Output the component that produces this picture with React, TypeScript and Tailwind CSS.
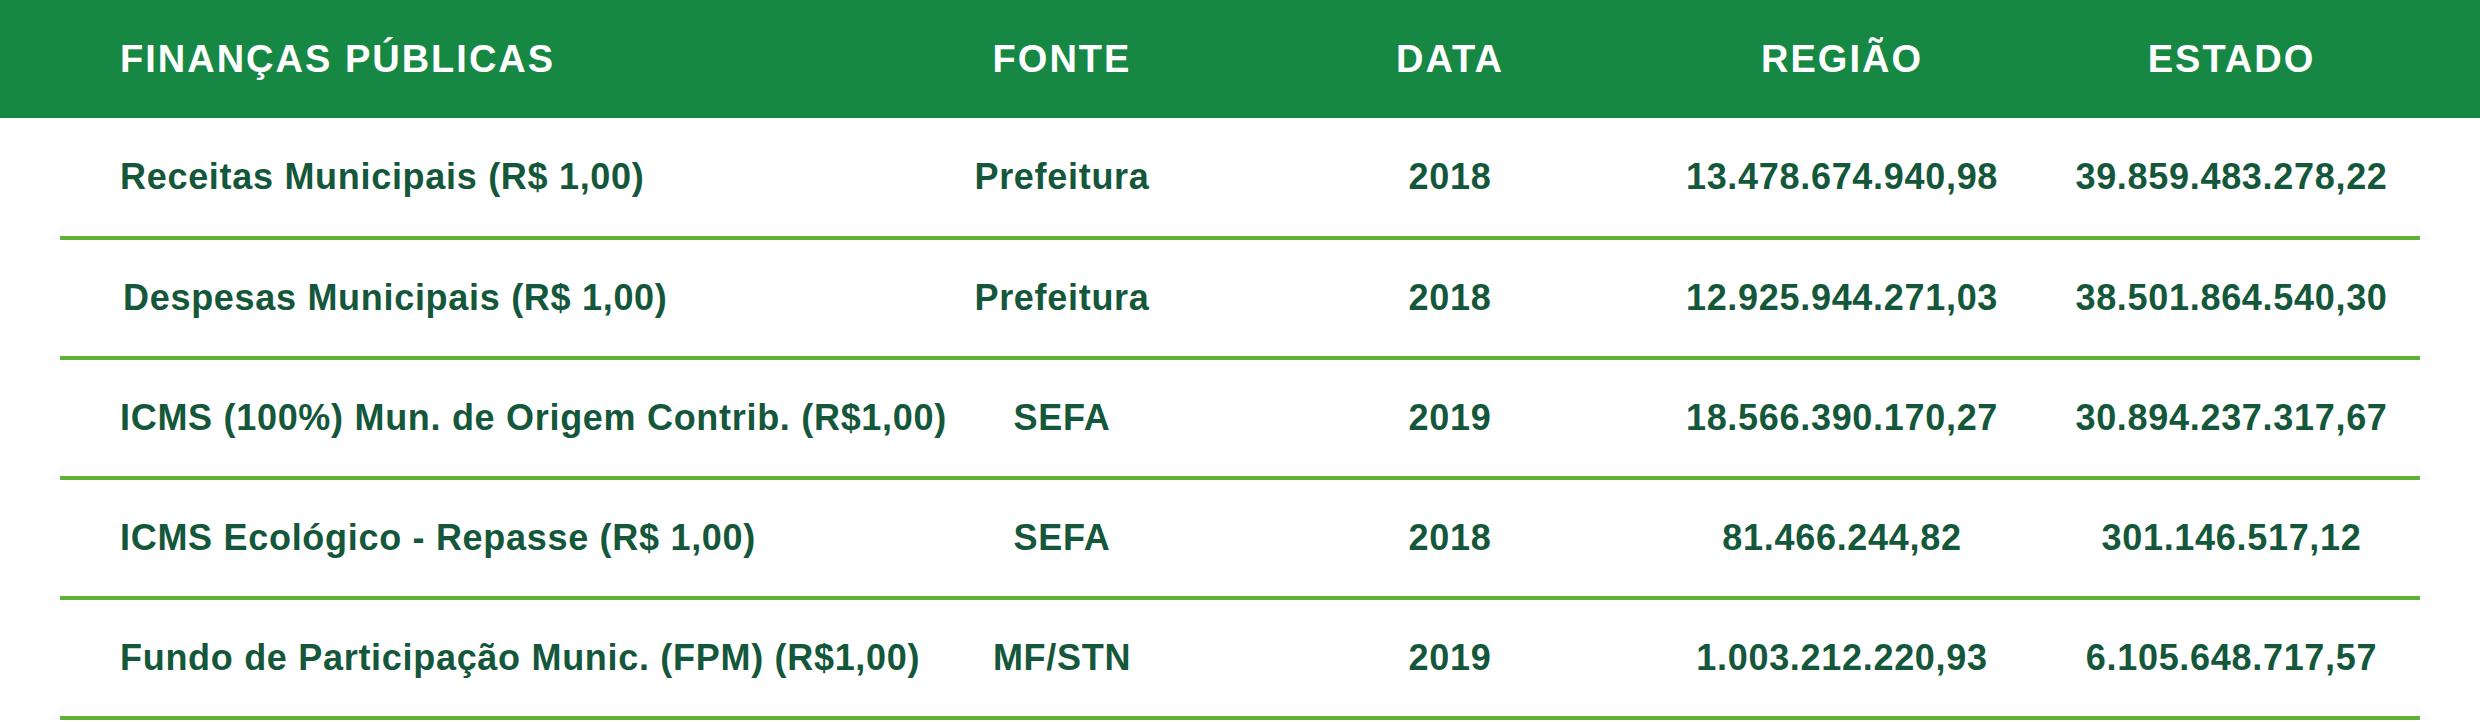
import React from "react";

const rows = [
  ["Receitas Municipais (R$ 1,00)", "Prefeitura", "2018", "13.478.674.940,98", "39.859.483.278,22"],
  ["Despesas Municipais (R$ 1,00)", "Prefeitura", "2018", "12.925.944.271,03", "38.501.864.540,30"],
  ["ICMS (100%) Mun. de Origem Contrib. (R$1,00)", "SEFA", "2019", "18.566.390.170,27", "30.894.237.317,67"],
  ["ICMS Ecológico - Repasse (R$ 1,00)", "SEFA", "2018", "81.466.244,82", "301.146.517,12"],
  ["Fundo de Participação Munic. (FPM) (R$1,00)", "MF/STN", "2019", "1.003.212.220,93", "6.105.648.717,57"],
];

const grid = "grid grid-cols-[840px_324px_452px_332px_413px] items-center";

export default function App() {
  return (
    <div
      className="w-[2480px] h-[722px] bg-white overflow-hidden"
      style={{ fontFamily: '"Liberation Sans", Arial, sans-serif' }}
    >
      <div className="h-[118px] bg-[#168844] px-[60px] flex items-center">
        <div className={`${grid} w-full text-white font-bold text-[38px] tracking-[2px] leading-none whitespace-nowrap`}>
          <div className="pl-[60px]">FINANÇAS PÚBLICAS</div>
          <div className="text-center">FONTE</div>
          <div className="text-center">DATA</div>
          <div className="text-center">REGIÃO</div>
          <div className="text-center pl-[34px]">ESTADO</div>
        </div>
      </div>
      <div className="px-[60px]">
        {rows.map((r, i) => (
          <div
            key={i}
            className={`${grid} ${i === 0 ? "h-[122px]" : "h-[120px]"} border-b-4 border-[#5db335] text-[#14573b] font-bold text-[36px] tracking-[0.7px] leading-none whitespace-nowrap`}
          >
            <div className={i === 1 ? "pl-[63px]" : "pl-[60px]"}>{r[0]}</div>
            <div className="text-center">{r[1]}</div>
            <div className="text-center">{r[2]}</div>
            <div className="text-center">{r[3]}</div>
            <div className="text-center pl-[34px]">{r[4]}</div>
          </div>
        ))}
      </div>
    </div>
  );
}
